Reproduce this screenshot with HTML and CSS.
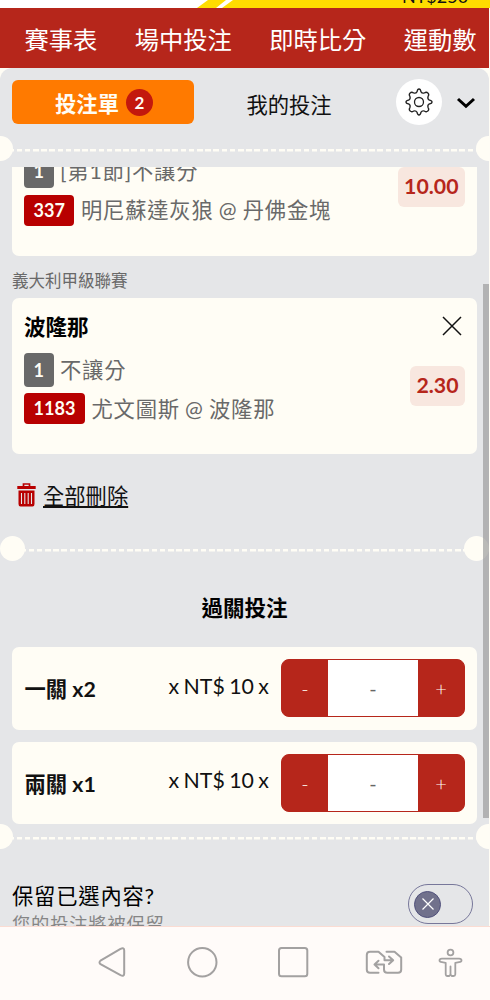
FILE: index.html
```html
<!DOCTYPE html>
<html lang="zh-Hant">
<head>
  <meta charset="UTF-8">
  <meta name="viewport" content="width=device-width, initial-scale=1">
  <title>投注單</title>
  <link rel="stylesheet" href="styles.css">
</head>
<body>
  <div class="banner">
    <svg width="40" height="8" viewBox="0 0 40 8"><path d="M1 8L12 0H30L20 8ZM26 8L37 0H40V8Z" fill="#ffdd00"/></svg>
    <div class="balance"><span>NT$250</span></div>
  </div>
  <nav class="main-nav">
    <a>賽事表</a>
    <a>場中投注</a>
    <a>即時比分</a>
    <a>運動數</a>
  </nav>

  <main class="betslip">
    <header class="tabs">
      <button class="tab active">投注單<span class="count">2</span></button>
      <button class="tab">我的投注</button>
      <button class="settings">
        <svg width="28" height="28" viewBox="0 0 28 28" fill="none" stroke="#222" stroke-width="1.3" stroke-linejoin="round">
          <path d="M12.1 3.6Q12.5 1 14 1Q15.500 1 15.900 3.600Q17 5.700 19.300 5Q21.500 3.500 22.900 5.100Q24.500 6.500 23 8.700Q22.300 11 24.400 12.100Q27 12.500 27 14Q27 15.500 24.400 15.900Q22.300 17 23 19.300Q24.500 21.500 22.900 22.900Q21.500 24.500 19.300 23Q17 22.300 15.900 24.400Q15.500 27 14 27Q12.500 27 12.100 24.400Q11 22.300 8.700 23Q6.500 24.500 5.100 22.900Q3.500 21.500 5 19.300Q5.700 17 3.600 15.900Q1 15.500 1 14Q1 12.500 3.600 12.100Q5.700 11 5 8.700Q3.500 6.500 5.100 5.100Q6.500 3.500 8.700 5Q11 5.700 12.100 3.600Z"/>
          <circle cx="14" cy="14" r="4.500"/>
        </svg>
      </button>
      <svg class="chevron" width="20" height="12" viewBox="0 0 20 12"><path d="M2 2L10 9.300L18 2" fill="none" stroke="#000" stroke-width="3"/></svg>
    </header>
    <div class="divider edge"></div>

    <div class="scroller">
      <section class="bet first">
        <div class="bet-head"><h3>丹佛金塊</h3></div>
        <div class="bet-body">
          <div>
            <p class="market"><span class="tag">1</span>[第1節]不讓分</p>
            <p class="match"><span class="tag red">337</span>明尼蘇達灰狼 @ 丹佛金塊</p>
          </div>
          <span class="odds">10.00</span>
        </div>
      </section>

      <h4 class="league">義大利甲級聯賽</h4>
      <section class="bet">
        <div class="bet-head">
          <h3>波隆那</h3>
          <svg width="20" height="20" viewBox="0 0 20 20"><path d="M1 1L19 19M19 1L1 19" stroke="#111" stroke-width="1.5"/></svg>
        </div>
        <div class="bet-body">
          <div>
            <p class="market"><span class="tag">1</span>不讓分</p>
            <p class="match"><span class="tag red">1183</span>尤文圖斯 @ 波隆那</p>
          </div>
          <span class="odds">2.30</span>
        </div>
      </section>

      <div class="delete-all">
        <svg width="19" height="24" viewBox="0 0 19 24">
          <path d="M6.500 3V1H12.500V3" fill="none" stroke="#b80000" stroke-width="1.700"/>
          <path d="M.3 3H18.700V6H.3ZM1.500 7.500H17.500V21Q17.500 23.500 15.500 23.500H3.500Q1.500 23.500 1.500 21Z" fill="#b80000"/>
          <path d="M4.500 10V21M7.800 10V21M11.200 10V21M14.500 10V21" stroke="#e5e6e8" stroke-width="1.100"/>
        </svg>
        <a>全部刪除</a>
      </div>
      <div class="divider inset"></div>

      <h2>過關投注</h2>
      <div class="stake">
        <b>一關 x2</b>
        <span class="amount">x NT$ 10 x</span>
        <div class="stepper"><button>-</button><span>-</span><button>+</button></div>
      </div>
      <div class="stake">
        <b>兩關 x1</b>
        <span class="amount">x NT$ 10 x</span>
        <div class="stepper"><button>-</button><span>-</span><button>+</button></div>
      </div>
      <div class="scrollbar"></div>
    </div>

    <div class="divider edge"></div>
    <div class="keep">
      <div>
        <p class="keep-title">保留已選內容?</p>
        <p class="keep-note">您的投注將被保留</p>
      </div>
      <div class="toggle">
        <span><svg width="12" height="12" viewBox="0 0 12 12"><path d="M.5 .5L11.500 11.500M11.500 .5L.5 11.500" stroke="#fff" stroke-width="1.200"/></svg></span>
      </div>
    </div>
  </main>

  <footer class="system-bar">
    <svg viewBox="0 0 490 73" width="490" height="73" fill="none" stroke="#a3a1a1" stroke-width="2" stroke-linejoin="round" stroke-linecap="round">
      <path d="M100.500 33.600L120.500 21.800Q124.200 20 124.200 23.500V46.500Q124.200 50 120.500 48.200L100.500 37.200Q98.500 35.500 100.500 33.600Z"/>
      <circle cx="202.300" cy="35.200" r="14.200"/>
      <rect x="279" y="21" width="28.300" height="28.300" rx="2.500"/>
      <path d="M378.500 45.800H370Q366.800 45.800 366.800 42.500V28Q366.800 24.700 370 24.700H378.500L384.500 30V33.200H393M389 29.500L393.200 33.200L389 37"/>
      <path d="M386.500 24.700H394.500L401.200 30.500V42.500Q401.200 45.800 398 45.800H387.300Q384 45.800 384 42.500V37.500H374.500M378.500 33.800L374.500 37.500L378.500 41.200"/>
      <g stroke-width="1.800">
        <circle cx="450.500" cy="25.500" r="2.900"/>
        <path d="M442 31.700H459Q461.500 31.900 461.500 33.500Q461.500 35 459 35.200L455.300 35.800V47.300Q455.200 49 453.500 49H451.700L450.500 47.500L449.300 49H447.500Q445.800 49 445.700 47.300V35.800L442 35.200Q439.500 35 439.500 33.500Q439.500 31.900 442 31.700ZM450.500 39.500V47.500"/>
      </g>
    </svg>
  </footer>
</body>
</html>
```

FILE: styles.css
```css
* {
  box-sizing: border-box;
}
body {
  margin: 0;
  width: 490px;
  height: 1000px;
  overflow: hidden;
  background: #fffdf5;
  font-family: Lato, "Noto Sans CJK TC", sans-serif;
  font-size: 21.3px;
  color: #111;
}
h2, h3, h4, p {
  margin: 0;
}
button {
  border: 0;
  padding: 0;
  font: inherit;
  color: inherit;
  background: none;
}
svg {
  display: block;
  flex-shrink: 0;
}

/* top banner and navigation */
.banner {
  display: flex;
  height: 8px;
  padding-left: 196px;
  overflow: hidden;
  background: #fff;
}
.balance {
  display: flex;
  flex: 1;
  align-items: flex-end;
  padding-left: 166px;
  background: #ffdd00;
  font-size: 18px;
  line-height: 14px;
}
.balance span {
  margin-bottom: 5px;
}
.main-nav {
  display: flex;
  gap: 37.300px;
  width: 489px;
  height: 60px;
  padding-left: 24.500px;
  overflow: hidden;
  background: #b6261b;
  color: #fff;
  font-size: 24.300px;
  line-height: 63px;
  white-space: nowrap;
}

/* bet slip */
.betslip {
  display: flex;
  flex-direction: column;
  width: 489px;
  height: 858px;
  overflow: hidden;
  border-radius: 12px 12px 0 0;
  background: #e5e6e8;
}
.tabs {
  display: flex;
  flex-shrink: 0;
  align-items: center;
  height: 68px;
  padding-left: 12px;
}
.tab {
  display: flex;
  align-items: center;
  justify-content: center;
  width: 190px;
  height: 44px;
}
.tab.active {
  gap: 7px;
  width: 182px;
  padding-left: 2px;
  border-radius: 6px;
  background: #ff7a00;
  color: #fffdf5;
  font-weight: 700;
}
.tab:not(.active) {
  padding-top: 2px;
}
.count {
  width: 27px;
  height: 27px;
  border-radius: 50%;
  background: #c3180d;
  font-size: 17px;
  line-height: 27px;
  text-align: center;
}
.settings {
  display: grid;
  place-items: center;
  width: 46px;
  height: 46px;
  margin-left: 12px;
  border-radius: 50%;
  background: #fff;
}
.chevron {
  margin: 2px 0 0 14px;
}
.divider {
  display: flex;
  flex-shrink: 0;
  align-items: center;
  justify-content: space-between;
  height: 25px;
  background: repeating-linear-gradient(to right, #fffdf5 0 5.600px, transparent 5.600px 8.200px) 4px 13px / 100% 2.500px no-repeat;
}
.divider::before,
.divider::after {
  content: "";
  width: 25px;
  height: 25px;
  border-radius: 50%;
  background: #fffdf5;
}
.divider.edge {
  margin: 0 -12px;
}
.scroller {
  position: relative;
  flex-shrink: 0;
  height: 657.500px;
  margin-top: 5.500px;
  padding: 0 12px;
  overflow: hidden;
}
.scrollbar {
  position: absolute;
  top: 117px;
  right: 0;
  width: 6px;
  height: 534px;
  background: rgba(153, 153, 153, .68);
}
.bet {
  height: 156.500px;
  padding: 12px 12px 0;
  border-radius: 7px;
  background: #fffdf5;
}
.bet.first {
  margin-top: -67.500px;
}
.bet-head {
  display: flex;
  align-items: center;
  justify-content: space-between;
  height: 34px;
  padding-right: 3px;
  color: #000;
}
.bet-head h3 {
  margin-top: -3px;
  font-size: 21.500px;
}
.bet-head svg {
  margin-top: -1px;
}
.bet-body {
  display: flex;
  justify-content: space-between;
  padding-top: 9px;
  color: #696969;
}
.bet-body p {
  display: flex;
  align-items: center;
  gap: 6.500px;
  line-height: 30px;
  letter-spacing: .8px;
  word-spacing: -1px;
  white-space: pre;
}
.market {
  height: 34px;
}
.match {
  height: 32px;
  margin-top: 6px;
}
.tag {
  padding: 0 9.500px;
  border-radius: 4px;
  background: #696969;
  color: #fffdf5;
  font-size: 18.100px;
  font-weight: 700;
  line-height: 34px;
  letter-spacing: 0;
}
.tag.red {
  background: #b80000;
  line-height: 31px;
}
.odds {
  height: 40px;
  margin-top: 13px;
  padding: 0 6.500px;
  border-radius: 6px;
  background: #f8e7df;
  color: #b6261b;
  font-size: 21.300px;
  font-weight: 700;
  line-height: 39px;
}
.league {
  height: 42px;
  color: #696969;
  font-size: 16.500px;
  font-weight: 400;
  line-height: 51px;
}
.delete-all {
  display: flex;
  align-items: center;
  gap: 7px;
  height: 82px;
  padding-left: 5px;
}
.delete-all svg {
  margin-top: -1px;
}
.delete-all a {
  margin-top: -2px;
  text-decoration: underline;
  text-decoration-thickness: 1.500px;
  text-underline-offset: 2px;
}
.scroller h2 {
  height: 86px;
  color: #000;
  font-size: 21.500px;
  line-height: 95px;
  text-align: center;
}
.divider.inset {
  margin: 0 -12px;
}

/* parlay stakes */
.stake {
  display: flex;
  align-items: center;
  height: 82.500px;
  margin-bottom: 12px;
  padding: 0 12px 0 12.500px;
  border-radius: 7px;
  background: #fffdf5;
}
.stake b {
  width: 144px;
  margin-top: -1px;
}
.amount {
  flex: 1;
  margin-top: -5px;
  white-space: nowrap;
  word-spacing: -1px;
}
.stepper {
  display: flex;
  width: 184px;
  height: 58px;
  overflow: hidden;
  border: 1.500px solid #b6261b;
  border-radius: 8px;
  background: #b6261b;
  line-height: 56px;
  text-align: center;
}
.stepper button {
  width: 46px;
  color: #fffdf5;
  font-size: 20px;
  font-weight: 300;
  line-height: 54px;
}
.stepper span {
  flex: 1;
  background: #fff;
  color: #666;
  font-size: 20px;
}

/* keep selections */
.keep {
  display: flex;
  justify-content: space-between;
  height: 90px;
  padding: 0 16px 0 12px;
}
.keep-title {
  padding-top: 31px;
  color: #000;
  line-height: 32px;
  letter-spacing: .8px;
}
.keep-note {
  color: #858585;
  font-size: 18.300px;
  line-height: 24px;
  letter-spacing: .8px;
}
.toggle {
  display: flex;
  align-items: center;
  width: 65px;
  height: 40px;
  margin-top: 35px;
  padding-left: 5px;
  border: 1.500px solid #77779a;
  border-radius: 20px;
}
.toggle span {
  display: grid;
  place-items: center;
  width: 27px;
  height: 27px;
  border: 1.500px solid #50507b;
  border-radius: 50%;
  background: #71718c;
}

.system-bar {
  height: 74px;
  border-top: 1px solid #fbdcd3;
  background: #fffbf9;
}
```
